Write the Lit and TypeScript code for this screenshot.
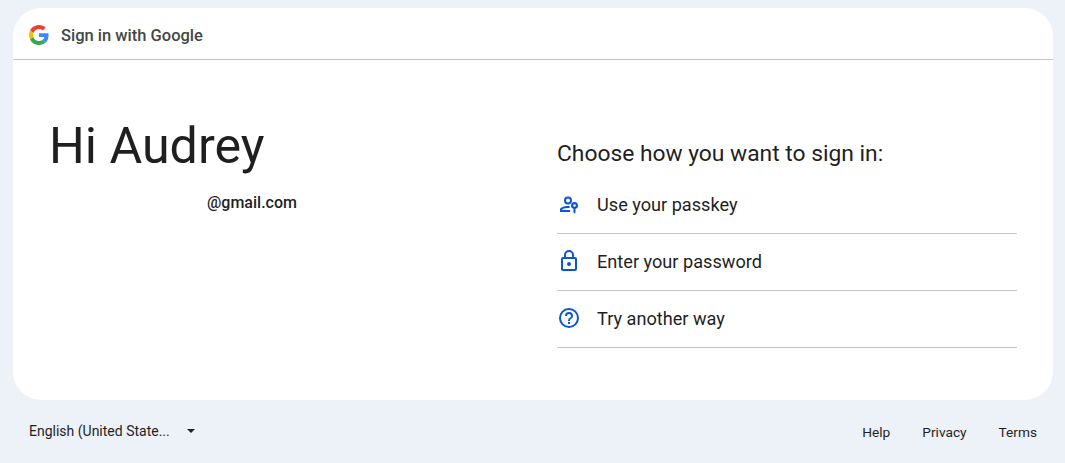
import { LitElement, html, css } from "lit";
import { customElement } from "lit/decorators.js";

@customElement("app-root")
export class AppRoot extends LitElement {
  static styles = css`
    :host { display: block; width: 1065px; height: 463px; background: #edf1f8; font-family: "Roboto", "Liberation Sans", sans-serif; color: #1f1f1f; overflow: hidden; }
    .page { display: flex; flex-direction: column; padding: 8px 12px 0 13px; }
    .card { height: 392px; background: #fff; border-radius: 28px; display: flex; flex-direction: column; }
    .head { height: 52px; box-sizing: border-box; border-bottom: 1px solid #c4c7c5; display: flex; align-items: center; gap: 12px; padding: 3px 0 0 16px; font-size: 16.5px; font-weight: 500; color: #444746; }
    .head svg { width: 20px; height: 20px; }
    .main { flex: 1; display: flex; }
    .left { width: 544px; box-sizing: border-box; padding: 54px 0 0 36px; }
    h1 { margin: 0; font-size: 50.2px; line-height: 64px; font-weight: 400; color: #1f1f1f; }
    .email { padding: 15px 0 0 158px; font-size: 16px; line-height: 20px; font-weight: 500; }
    .right { width: 460px; padding-top: 78px; }
    h2 { margin: 0 0 7px; font-size: 22.8px; line-height: 32px; font-weight: 400; }
    .row { height: 57px; box-sizing: border-box; border-bottom: 1px solid #c4c7c5; display: flex; align-items: center; gap: 16px; font-size: 18.15px; line-height: 22px; padding-bottom: 2px; }
    .row span { padding-top: 2px; }
    .row svg { width: 24px; height: 24px; fill: #0b57d0; flex: none; }
    .foot { display: flex; justify-content: space-between; align-items: center; height: 62px; font-size: 14px; padding: 0 16px 0 16px; }
    .lang { display: flex; align-items: center; gap: 17px; }
    .lang i { width: 0; height: 0; border: 4.5px solid transparent; border-top: 4.5px solid #1f1f1f; border-bottom: 0; }
    .links { display: flex; gap: 32px; padding-top: 2px; font-size: 13.7px; }
  `;
  render() {
    return html`<div class="page">
      <div class="card">
        <div class="head">
          <svg viewBox="0 0 48 48"><path fill="#EA4335" d="M24 9.5c3.54 0 6.71 1.22 9.21 3.6l6.85-6.85C35.9 2.38 30.47 0 24 0 14.62 0 6.51 5.38 2.56 13.22l7.98 6.19C12.43 13.72 17.74 9.5 24 9.5z"/><path fill="#4285F4" d="M46.98 24.55c0-1.57-.15-3.09-.38-4.55H24v9.02h12.94c-.58 2.96-2.26 5.48-4.78 7.18l7.73 6c4.51-4.18 7.09-10.36 7.09-17.65z"/><path fill="#FBBC05" d="M10.53 28.59c-.48-1.45-.76-2.99-.76-4.59s.27-3.14.76-4.59l-7.98-6.19C.92 16.46 0 20.12 0 24c0 3.88.92 7.54 2.56 10.78l7.97-6.19z"/><path fill="#34A853" d="M24 48c6.48 0 11.93-2.13 15.89-5.81l-7.73-6c-2.15 1.45-4.92 2.3-8.16 2.3-6.26 0-11.57-4.22-13.47-9.91l-7.98 6.19C6.51 42.62 14.62 48 24 48z"/></svg>
          <span>Sign in with Google</span>
        </div>
        <div class="main">
          <div class="left"><h1>Hi Audrey</h1><div class="email">@gmail.com</div></div>
          <div class="right">
            <h2>Choose how you want to sign in:</h2>
            <div class="row"><svg viewBox="0 0 24 24"><path fill-rule="evenodd" d="M11 12.500a4 4 0 1 0 0-8 4 4 0 0 0 0 8zm0-6a2 2 0 1 1 0 4 2 2 0 0 1 0-4z"/><path d="M3 20v-2.400C3 15.200 7.500 14 11 14c.5 0 1 0 1.600.1v2c-.6-.1-1.100-.1-1.600-.1-3 0-5.800 1-6 1.700v.3h8v2H3z"/><path fill-rule="evenodd" d="M17.500 10a3.500 3.500 0 0 0-1 6.850V20.500l1 .9 1-.9v-3.650a3.500 3.500 0 0 0-1-6.850zm0 2.200a1.300 1.300 0 1 1 0 2.600 1.300 1.300 0 0 1 0-2.600z"/></svg><span>Use your passkey</span></div>
            <div class="row"><svg viewBox="0 0 24 24"><path d="M18 8h-1V6A5 5 0 0 0 7 6v2H6a2 2 0 0 0-2 2v10a2 2 0 0 0 2 2h12a2 2 0 0 0 2-2V10a2 2 0 0 0-2-2zM9 6a3 3 0 0 1 6 0v2H9V6zm9 14H6V10h12v10zm-6-3a2 2 0 1 0 0-4 2 2 0 0 0 0 4z"/></svg><span>Enter your password</span></div>
            <div class="row"><svg viewBox="0 0 24 24"><path d="M11 18h2v-2h-2v2zm1-16a10 10 0 1 0 0 20 10 10 0 0 0 0-20zm0 18a8 8 0 1 1 0-16 8 8 0 0 1 0 16zm0-14a4 4 0 0 0-4 4h2a2 2 0 1 1 4 0c0 2-3 1.750-3 5h2c0-2.250 3-2.500 3-5a4 4 0 0 0-4-4z"/></svg><span>Try another way</span></div>
          </div>
        </div>
      </div>
      <div class="foot">
        <div class="lang"><span>English (United State...</span><i></i></div>
        <div class="links"><span>Help</span><span>Privacy</span><span>Terms</span></div>
      </div>
    </div>`;
  }
}
